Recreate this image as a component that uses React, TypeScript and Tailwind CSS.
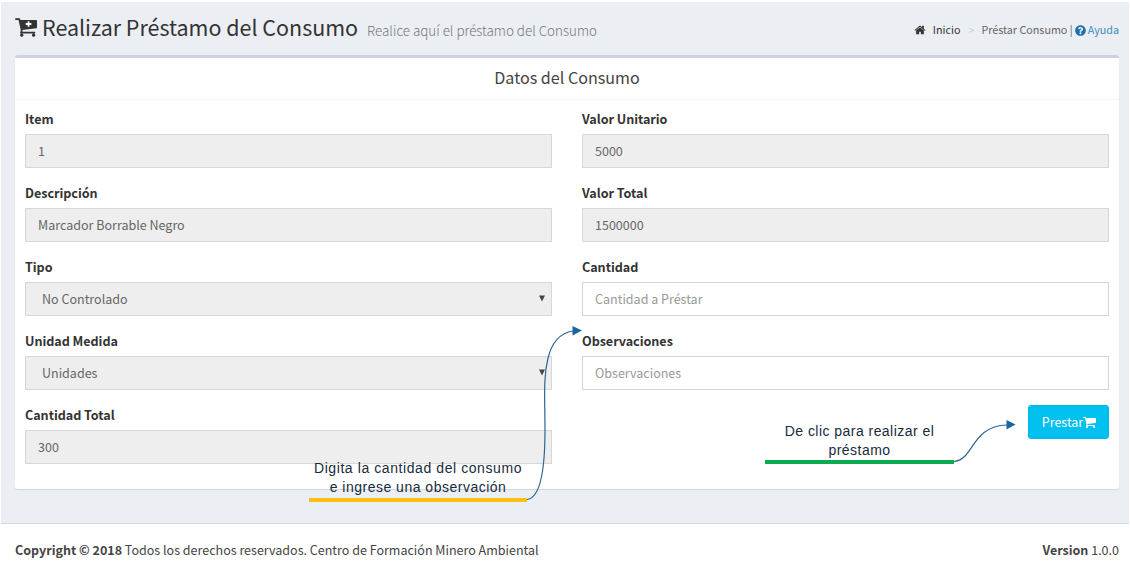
import React from "react";
import { FaQuestionCircle } from "react-icons/fa";

const CART =
  "M704 1536q0 52-38 90t-90 38-90-38-38-90 38-90 90-38 90 38 38 90zm896 0q0 52-38 90t-90 38-90-38-38-90 38-90 90-38 90 38 38 90zm128-1088v512q0 24-16.500 42.500t-40.500 21.500l-1044 122q13 60 13 70 0 16-24 64h920q26 0 45 19t19 45-19 45-45 19h-1024q-26 0-45-19t-19-45q0-11 8-31.500t16-36 21.500-40 15.500-29.500l-177-823h-204q-26 0-45-19t-19-45 19-45 45-19h256q16 0 28.500 6.500t19.500 15.500 13 24.500 8 26 5.500 29.500 4.500 26h1201q26 0 45 19t19 45z";

const HOME =
  "M1472 992v480q0 26-19 45t-45 19h-384v-384h-256v384h-384q-26 0-45-19t-19-45v-480q0-1 .5-3t.5-3l575-474 575 474q1 2 1 6zm223-69l-62 74q-8 9-21 11h-3q-13 0-21-7l-692-577-692 577q-12 8-24 7-13-2-21-11l-62-74q-8-10-7-23.500t11-21.500l719-599q32-26 76-26t76 26l244 204v-195q0-14 9-23t23-9h192q14 0 23 9t9 23v408l219 182q10 8 11 21.500t-7 23.500z";

function Cart({ className, plus }: { className: string; plus?: boolean }) {
  return (
    <svg viewBox="64 256 1664 1408" className={className} fill="currentColor">
      <path d={CART} />
      {plus && <path d="M1088 480v430M873 695h430" stroke="#f6f8fa" strokeWidth="135" />}
    </svg>
  );
}

function Label({ children }: { children: React.ReactNode }) {
  return (
    <label className="mb-[5px] block h-5 text-[12.6px] leading-5 font-bold tracking-[-0.04px] text-[#333]">
      {children}
    </label>
  );
}

function Field({ label, value, placeholder }: { label: string; value?: string; placeholder?: string }) {
  return (
    <div className="mb-[15px]">
      <Label>{label}</Label>
      <div
        className={
          placeholder
            ? "flex h-[34px] items-center border border-[#d2d6de] bg-white px-3 text-[12.53px] text-[#999]"
            : "flex h-[34px] items-center border border-[#d5d7da] bg-[#eee] px-3 text-[12.53px] text-[#666]"
        }
      >
        {placeholder ?? value}
      </div>
    </div>
  );
}

function Select({ label, value }: { label: string; value: string }) {
  return (
    <div className="mb-[15px]">
      <Label>{label}</Label>
      <div className="flex h-[34px] items-center justify-between border border-[#d5d7da] bg-[#eee] pr-[5px] pl-4 text-[12.53px] text-[#666]">
        <span>{value}</span>
        <svg viewBox="0 0 8 7" className="mb-px h-[7px] w-[8px]">
          <path d="M1 0.500h6L4 6.500z" fill="#444" />
        </svg>
      </div>
    </div>
  );
}

export default function App() {
  return (
    <div className="relative h-[575px] w-[1130px] overflow-hidden bg-white font-['Noto_Sans_CJK_SC',sans-serif] text-[#333]">
      <main className="mt-[2px] mr-px ml-px h-[522px] border-b border-[#d2d6de] bg-[#ebeff3] pr-[10px] pl-[14px]">
        <header className="flex h-[53px] items-start justify-between">
          <h1 className="flex h-[50px] items-center">
            <Cart plus className="mt-px mr-[5px] h-[19px] w-[22px]" />
            <span className="text-[21.46px] leading-[50px]">Realizar Préstamo del Consumo</span>
            <small className="ml-[9px] pt-[6px] text-[13.4px] font-light text-[#777]">
              Realice aquí el préstamo del Consumo
            </small>
          </h1>
          <nav className="flex h-[56px] items-center text-[10.75px] text-[#666]">
            <svg viewBox="0 0 1792 1792" className="mr-[7px] size-[12px] text-[#333]" fill="currentColor">
              <path d={HOME} />
            </svg>
            <span className="text-[#333]">Inicio</span>
            <span className="mr-[7px] ml-[8px] text-[#ccc]">&gt;</span>
            <span>Préstar Consumo |</span>
            <FaQuestionCircle className="mr-[2px] ml-[2px] size-[11px] text-[#1d6fae]" />
            <span className="text-[#3c8dbc]">Ayuda</span>
          </nav>
        </header>
        <section className="h-[434px] rounded-[3px] border-t-[3px] border-[#d0d1de] bg-white shadow-[0_1px_1px_rgba(0,0,0,0.1)]">
          <h3 className="h-[42px] border-b border-[#f4f4f4] text-center text-[16.1px] leading-[38px] text-[#444]">
            Datos del Consumo
          </h3>
          <div className="grid grid-cols-2 gap-x-[30px] px-[10px] pt-[9px]">
            <div>
              <Field label="Item" value="1" />
              <Field label="Descripción" value="Marcador Borrable Negro" />
              <Select label="Tipo" value="No Controlado" />
              <Select label="Unidad Medida" value="Unidades" />
              <Field label="Cantidad Total" value="300" />
            </div>
            <div>
              <Field label="Valor Unitario" value="5000" />
              <Field label="Valor Total" value="1500000" />
              <Field label="Cantidad" placeholder="Cantidad a Préstar" />
              <Field label="Observaciones" placeholder="Observaciones" />
              <button className="ml-auto flex h-[34px] w-[81px] items-center justify-center rounded-[3px] border border-[#00b8e5] bg-[#00c0ef] pl-px text-[12.53px] text-white">
                Prestar
                <Cart className="h-[11px] w-[13px]" />
              </button>
            </div>
          </div>
        </section>
      </main>
      <footer className="flex h-[51px] items-center justify-between pt-px pr-[11px] pl-[15px] text-[12.53px] text-[#444]">
        <span>
          <b>Copyright © 2018</b> Todos los derechos reservados. Centro de Formación Minero Ambiental
        </span>
        <span>
          <b>Version</b> 1.0.0
        </span>
      </footer>

      <div className="absolute top-[459px] left-[309px] w-[218px] border-b-4 border-[#fdc010] pb-px text-center font-['Liberation_Sans',sans-serif] text-[14px] leading-[19px] tracking-[0.58px] whitespace-nowrap text-[#172b3d]">
        Digita la cantidad del consumo
        <br />
        <span className="tracking-[0.5px]">e ingrese una observación</span>
      </div>
      <div className="absolute top-[422px] left-[765px] w-[189px] border-b-4 border-[#0bab50] text-center font-['Liberation_Sans',sans-serif] text-[14px] leading-[19px] tracking-[0.46px] whitespace-nowrap text-[#172b3d]">
        De clic para realizar el
        <br />
        préstamo
      </div>
      <svg viewBox="0 0 1130 575" className="pointer-events-none absolute inset-0 h-[575px] w-[1130px]" fill="none">
        <path d="M527 499.500C540 498 545 471 545 430C545 398 543 379 548 358C552 342 560 333 573 331" stroke="#2d6590" strokeWidth="1.200" />
        <path d="M572.500 326v9.500l9.500-5z" fill="#1d659c" />
        <path d="M954 461.500C974 460 971 426 1007 425" stroke="#2d6590" strokeWidth="1.200" />
        <path d="M1006.500 420v9.500l9-5z" fill="#1d659c" />
      </svg>
    </div>
  );
}
